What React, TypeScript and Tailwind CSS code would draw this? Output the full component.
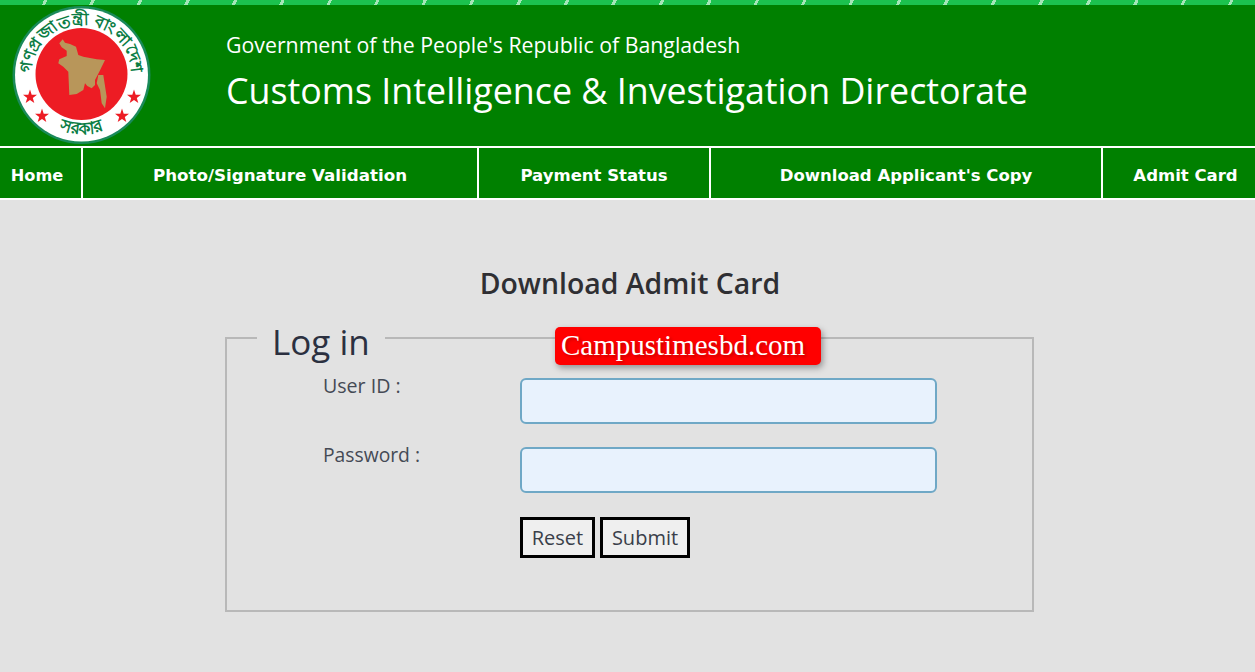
import React from 'react';

const navItems = [
  { label: 'Home', width: 'w-[74px] pr-[7px] text-[16.2px]' },
  { label: 'Photo/Signature Validation', width: 'w-[394px] text-[16.7px]' },
  { label: 'Payment Status', width: 'w-[230px] text-[16.5px]' },
  { label: "Download Applicant's Copy", width: 'w-[390px] text-[16.5px]' },
  { label: 'Admit Card', width: 'flex-1 pl-[13px] text-[16.5px]' },
];

const Star = ({ x, y }: { x: number; y: number }) => {
  const pts = Array.from({ length: 10 }, (_, i) => {
    const r = i % 2 === 0 ? 7.4 : 2.9;
    const a = (Math.PI / 5) * i - Math.PI / 2;
    return `${(x + r * Math.cos(a)).toFixed(1)},${(y + r * Math.sin(a)).toFixed(1)}`;
  }).join(' ');
  return <polygon points={pts} fill="#ed1c24" />;
};

const Seal = () => (
  <svg width="170" height="146" viewBox="0 0 170 146" className="block">
    <circle cx="81.5" cy="75" r="69" fill="#1a8a5a" />
    <circle cx="81.5" cy="75" r="66.5" fill="#ffffff" />
    <circle cx="81.5" cy="74" r="46" fill="#ed1c24" />
    <defs>
      <path id="sealTop" d="M 32 82 A 50 50 0 1 1 131 82" />
      <path id="sealBottom" d="M 30 105 A 60 60 0 0 0 133 105" />
    </defs>
    <text fontFamily="'Noto Sans', 'DejaVu Sans', sans-serif" fontSize="16.5" fontWeight="700" fill="#0b7d45">
      <textPath href="#sealTop" startOffset="50%" textAnchor="middle">
        গণপ্রজাতন্ত্রী বাংলাদেশ
      </textPath>
    </text>
    <text fontFamily="'Noto Sans', 'DejaVu Sans', sans-serif" fontSize="17" fontWeight="700" fill="#0b7d45">
      <textPath href="#sealBottom" startOffset="50%" textAnchor="middle">
        সরকার
      </textPath>
    </text>
    <path
      d="M62.7 39.3 L59.3 43.3 L61.7 47.3 L66.7 50.7 L66.7 56 L59.3 59.3 L58.3 63.3 L63.3 66.7 L68.3 71.7 L69.3 95 L76.7 94 L83.3 90 L85 83.3 L87.3 86 L91.7 88.3 L95 85 L95 80 L99.3 71.7 L105 60 L96.7 59.3 L83.3 56.7 L78.3 55 L76 46.7 L70 44 L65 42.7 Z"
      fill="#b8965a"
    />
    <path d="M98.3 75 L103.3 75 L106.7 96.7 L105 108.3 L101.7 103.3 L100 90 L96.7 83.3 Z" fill="#b8965a" />
    <Star x={30} y={97} />
    <Star x={134} y={97} />
    <Star x={42} y={116} />
    <Star x={122} y={116} />
  </svg>
);

export default function App() {
  return (
    <div className="min-h-[672px] bg-[#e2e2e2] font-['Open_Sans',sans-serif] overflow-hidden">
      <div className="h-[5px] bg-[repeating-linear-gradient(115deg,#1cc24f_0px,#1cc24f_40px,#a5e6b8_40px,#a5e6b8_43px)]" />
      <header className="h-[141px] bg-[#008000] flex text-white">
        <div className="w-[170px] shrink-0 -mt-[5px]">
          <Seal />
        </div>
        <div className="pl-[56px] pt-[26px]">
          <p className="text-[21.3px] leading-[28px]">Government of the People's Republic of Bangladesh</p>
          <h1 className="text-[35.8px] leading-[48px] mt-[7px]">Customs Intelligence &amp; Investigation Directorate</h1>
        </div>
      </header>
      <nav className="h-[54px] border-y-2 border-white bg-[#008000] flex font-['DejaVu_Sans',sans-serif]">
        {navItems.map((item, i) => (
          <div
            key={item.label}
            className={`${item.width} ${i < navItems.length - 1 ? 'border-r-2 border-white box-content' : ''} flex items-center justify-center pt-[6px] text-white font-bold`}
          >
            {item.label}
          </div>
        ))}
      </nav>
      <main className="relative pt-[65px]">
        <h2 className="text-center pl-[5px] text-[28.4px] leading-[37px] font-semibold text-[#2f2f33]">Download Admit Card</h2>
        <fieldset className="ml-[225px] mr-[221px] mt-[12px] h-[298px] border-2 border-[#b8b8b8] pl-[30px]">
          <legend className="h-[48px] pt-[8px] pl-[15px] pr-[15px] text-[35px] leading-[40px] text-[#2b3040]">Log in</legend>
          <div className="flex items-start pl-[66px] h-[69px]">
            <label className="w-[197px] mt-[10px] text-[19.6px] leading-[27px] text-[#454a55]">User ID :</label>
            <input className="w-[417px] h-[46px] mt-[16px] rounded-[6px] border-2 border-[#6fa8c6] bg-[#e8f2fd]" />
          </div>
          <div className="flex items-start pl-[66px] h-[69px]">
            <label className="w-[197px] mt-[10px] text-[19.3px] leading-[27px] text-[#454a55]">Password :</label>
            <input type="password" className="w-[417px] h-[46px] mt-[16px] rounded-[6px] border-2 border-[#6fa8c6] bg-[#e8f2fd]" />
          </div>
          <div className="flex gap-[5px] pl-[263px] mt-[17px]">
            <button className="h-[41px] w-[75px] border-[3px] border-black bg-[#efefef] text-[20px] text-[#3a3f4a]">Reset</button>
            <button className="h-[41px] w-[90px] border-[3px] border-black bg-[#efefef] text-[20px] text-[#3a3f4a]">Submit</button>
          </div>
        </fieldset>
        <div className="absolute left-[555px] top-[127px] w-[266px] h-[38px] rounded-[5px] bg-[#ff0000] pl-[6px] font-['Liberation_Serif',serif] text-[29px] leading-[36px] text-white [text-shadow:2px_2px_3px_rgba(120,0,0,0.4)] shadow-[2px_3px_6px_rgba(0,0,0,0.35)]">
          Campustimesbd.com
        </div>
      </main>
    </div>
  );
}
